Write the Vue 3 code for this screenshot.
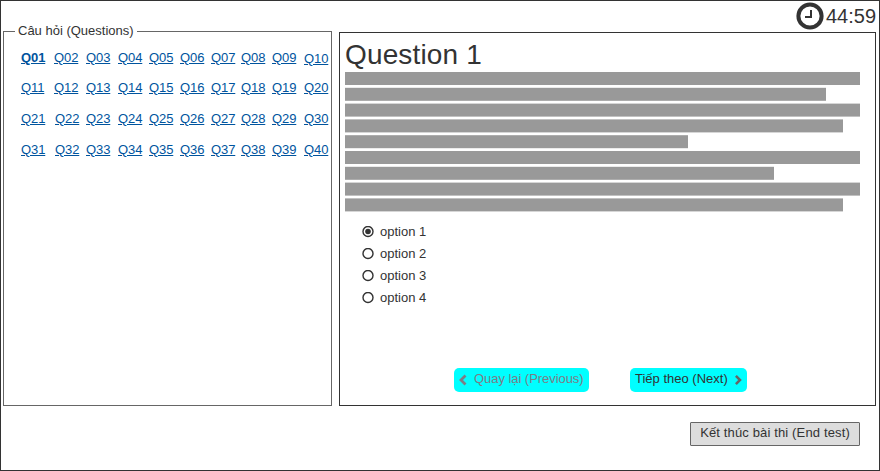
<script setup>
import { ref } from 'vue'

const rows = [0, 1, 2, 3].map((r) =>
  Array.from({ length: 10 }, (_, c) => 'Q' + String(r * 10 + c + 1).padStart(2, '0'))
)
const lines = [515, 481, 515, 498, 343, 515, 429, 515, 498]
const options = ['option 1', 'option 2', 'option 3', 'option 4']
const selected = ref(0)
</script>

<template>
  <div class="page">
    <header class="timer">
      <svg class="clock" width="28" height="28" viewBox="0 0 28 28">
        <circle cx="14" cy="14" r="11.6" fill="none" stroke="#333" stroke-width="4" />
        <path d="M15 8V15H9" fill="none" stroke="#333" stroke-width="2" />
      </svg>
      <span class="time">44:59</span>
    </header>

    <main class="panels">
      <section class="questions">
        <h2 class="legend">Câu hỏi (Questions)</h2>
        <nav class="list">
          <div v-for="(row, r) in rows" :key="r" class="row">
            <a v-for="q in row" :key="q" class="link" :class="{ current: q === 'Q01', low: q === 'Q10', shifted: q === 'Q22' || q === 'Q32' }">{{ q }}</a>
          </div>
        </nav>
      </section>

      <section class="detail">
        <h1 class="title">Question 1</h1>
        <svg class="lines" width="515" height="140" viewBox="0 0 515 140">
          <rect v-for="(w, i) in lines" :key="i" x="0" :y="i * 15.8" :width="w" height="13" fill="#999" />
        </svg>
        <div class="options">
          <div v-for="(o, i) in options" :key="o" class="option" @click="selected = i">
            <svg width="12" height="12" viewBox="0 0 12 12">
              <circle cx="6" cy="5.5" r="5" fill="#fff" stroke="#333" stroke-width="1.4" />
              <circle v-if="selected === i" cx="6" cy="5.5" r="2.8" fill="#333" />
            </svg>
            <span>{{ o }}</span>
          </div>
        </div>
        <div class="pager">
          <button class="nav prev" disabled>
            <svg width="8" height="12" viewBox="0 0 8 12"><path d="M6.5 1.5L2 6L6.5 10.5" fill="none" stroke="#7d7d86" stroke-width="2.8" /></svg>
            <span>Quay lại (Previous)</span>
          </button>
          <button class="nav next">
            <span>Tiếp theo (Next)</span>
            <svg width="8" height="12" viewBox="0 0 8 12"><path d="M1 1.5L5.5 6L1 10.5" fill="none" stroke="#666" stroke-width="2.8" /></svg>
          </button>
        </div>
      </section>
    </main>

    <footer class="footer">
      <button class="end">Kết thúc bài thi (End test)</button>
    </footer>
  </div>
</template>

<style>
body {
  margin: 0;
  background: #fff;
}
</style>

<style scoped>
.page {
  box-sizing: border-box;
  width: 880px;
  height: 471px;
  border: 1px solid #333;
  background: #fff;
  color: #333;
  font: 13px/16px "Liberation Sans", Arial, sans-serif;
  overflow: hidden;
}
.timer {
  display: flex;
  justify-content: flex-end;
  gap: 2px;
  height: 30px;
  padding: 1px 3px 0 0;
  box-sizing: border-box;
}
.time {
  width: 50px;
  font-size: 20px;
  line-height: 28px;
}
.panels {
  display: flex;
  gap: 7px;
  padding-left: 2px;
}
.questions {
  box-sizing: border-box;
  width: 329px;
  height: 375px;
  border: 1px solid #666;
}
.legend {
  width: 116px;
  height: 16px;
  margin: -9px 0 0 11px;
  padding: 0 3px;
  background: #fff;
  font-size: 13px;
  font-weight: 400;
  line-height: 16px;
  white-space: nowrap;
}
.list {
  display: grid;
  grid-template-rows: 30px 31px 31px 16px;
  padding: 11px 0 0 17px;
}
.row {
  display: grid;
  grid-template-columns: 33px 32px 32px 31px 31px 31px 30px 31px 32px 25px;
}
.link {
  color: #00549e;
  height: 16px;
  letter-spacing: -0.1px;
  text-decoration: underline;
  text-underline-offset: 1px;
  text-decoration-thickness: 1px;
  cursor: pointer;
}
.current {
  font-weight: 700;
}
.low {
  padding-top: 1px;
}
.shifted {
  padding-left: 1px;
}
.detail {
  box-sizing: border-box;
  width: 537px;
  height: 374px;
  margin-top: 1px;
  border: 1px solid #333;
  padding-left: 5px;
}
.title {
  margin: 6px 0 1px;
  font-size: 28px;
  font-weight: 400;
  line-height: 32px;
  letter-spacing: 0.15px;
}
.lines {
  display: block;
}
.options {
  display: grid;
  grid-auto-rows: 22px;
  padding: 9px 0 0 17px;
}
.option {
  display: flex;
  align-items: center;
  gap: 6px;
}
.pager {
  display: flex;
  gap: 41px;
  padding: 59px 0 0 109px;
}
.nav {
  display: flex;
  align-items: center;
  box-sizing: border-box;
  height: 24px;
  padding: 0 5px;
  border: 0;
  border-radius: 5px;
  background: #0ff;
  color: #333;
  font: inherit;
  white-space: nowrap;
}
.nav span {
  margin-top: -2px;
}
.prev {
  width: 135px;
  gap: 7px;
  color: #7d7d86;
  letter-spacing: -0.05px;
}
.next {
  width: 117px;
  gap: 7px;
}
.footer {
  display: flex;
  justify-content: flex-end;
  padding: 16px 19px 0 0;
}
.end {
  box-sizing: border-box;
  width: 170px;
  height: 24px;
  padding: 0 0 2px;
  border: 1px solid #666;
  border-radius: 1px;
  background: #ddd;
  color: #333;
  font: inherit;
  letter-spacing: 0.14px;
  white-space: nowrap;
}
</style>
